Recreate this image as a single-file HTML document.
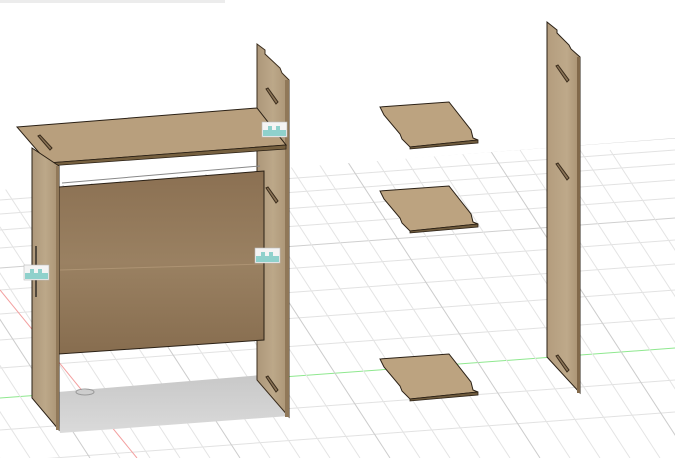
<!DOCTYPE html>
<html><head><style>
html,body{margin:0;padding:0;background:#fff;width:675px;height:458px;overflow:hidden}
svg{display:block}
</style></head><body>
<svg width="675" height="458" viewBox="0 0 675 458" xmlns="http://www.w3.org/2000/svg">
<defs>
<clipPath id="floor"><polygon points="0,190 675,138 675,458 0,458"/></clipPath>
<linearGradient id="side" x1="0" x2="1"><stop offset="0" stop-color="#ad977a"/><stop offset="0.5" stop-color="#bca889"/><stop offset="1" stop-color="#aa9374"/></linearGradient>
<linearGradient id="back" x1="0" y1="0" x2="0" y2="1"><stop offset="0" stop-color="#8b7052"/><stop offset="0.5" stop-color="#9a8162"/><stop offset="1" stop-color="#876d4f"/></linearGradient>
<linearGradient id="tall" x1="0" x2="1"><stop offset="0" stop-color="#b39c7d"/><stop offset="0.6" stop-color="#bea98a"/><stop offset="1" stop-color="#a89172"/></linearGradient>
<linearGradient id="shd" x1="0" y1="0" x2="0" y2="1"><stop offset="0" stop-color="#c8c8c8"/><stop offset="1" stop-color="#dadada"/></linearGradient>
</defs>
<rect x="0" y="0" width="225" height="3" fill="#ececec"/>
<g clip-path="url(#floor)" stroke-width="1" fill="none">
<g stroke="#e2e2e2">
<line x1="0" y1="200" x2="675" y2="150"/>
<line x1="0" y1="214" x2="675" y2="164"/>
<line x1="0" y1="230" x2="675" y2="180"/>
<line x1="0" y1="248" x2="675" y2="198"/>
<line x1="0" y1="290" x2="675" y2="240"/>
<line x1="0" y1="314" x2="675" y2="264"/>
<line x1="0" y1="340" x2="675" y2="290"/>
<line x1="0" y1="368" x2="675" y2="318"/>
<line x1="0" y1="430" x2="675" y2="380"/>
<line x1="0" y1="462" x2="675" y2="412"/>
</g>
<g stroke="#cfcfcf">
<line x1="0" y1="188" x2="675" y2="138"/>
<line x1="0" y1="268" x2="675" y2="218"/>
</g>
<line x1="0" y1="398" x2="675" y2="348" stroke="#8fe88f"/>
<g stroke="#e4e4e4">
<line x1="-260" y1="150" x2="-60" y2="458"/>
<line x1="-230" y1="150" x2="-30" y2="458"/>
<line x1="-200" y1="150" x2="0" y2="458"/>
<line x1="-170" y1="150" x2="30" y2="458"/>
<line x1="-140" y1="150" x2="60" y2="458"/>
<line x1="-80" y1="150" x2="120" y2="458"/>
<line x1="-50" y1="150" x2="150" y2="458"/>
<line x1="-20" y1="150" x2="180" y2="458"/>
<line x1="10" y1="150" x2="210" y2="458"/>
<line x1="70" y1="150" x2="270" y2="458"/>
<line x1="100" y1="150" x2="300" y2="458"/>
<line x1="130" y1="150" x2="330" y2="458"/>
<line x1="160" y1="150" x2="360" y2="458"/>
<line x1="220" y1="150" x2="420" y2="458"/>
<line x1="250" y1="150" x2="450" y2="458"/>
<line x1="280" y1="150" x2="480" y2="458"/>
<line x1="310" y1="150" x2="510" y2="458"/>
<line x1="370" y1="150" x2="570" y2="458"/>
<line x1="400" y1="150" x2="600" y2="458"/>
<line x1="430" y1="150" x2="630" y2="458"/>
<line x1="460" y1="150" x2="660" y2="458"/>
<line x1="520" y1="150" x2="720" y2="458"/>
<line x1="550" y1="150" x2="750" y2="458"/>
<line x1="580" y1="150" x2="780" y2="458"/>
<line x1="610" y1="150" x2="810" y2="458"/>
</g>
<g stroke="#cccccc">
<line x1="-110" y1="150" x2="90" y2="458"/>
<line x1="40" y1="150" x2="240" y2="458"/>
<line x1="190" y1="150" x2="390" y2="458"/>
<line x1="340" y1="150" x2="540" y2="458"/>
<line x1="490" y1="150" x2="690" y2="458"/>
</g>
<line x1="0" y1="290" x2="137" y2="458" stroke="#f3a0a0"/>
</g>
<polygon points="58,392 262,375 289,416 60,433" fill="url(#shd)"/>
<ellipse cx="85" cy="392" rx="9" ry="3" fill="none" stroke="#999"/>
<polygon points="257,44 265,50 265,54 280,68 282,73 289,80 289,417 257,380" fill="url(#side)" stroke="#3a2c1c" stroke-width="1"/>
<rect x="285" y="80" width="4" height="337" fill="#907859"/>
<g stroke="#3a2c1c" stroke-width="1" fill="#8a7356">
<polygon points="266,89 268,88 278,102 276,104"/>
<polygon points="266,188 268,187 278,201 276,203"/>
<polygon points="266,377 268,376 278,390 276,392"/>
</g>
<polygon points="59,187 264,171 264,340 59,354" fill="url(#back)" stroke="#2a2015" stroke-width="1"/>
<line x1="60" y1="270" x2="263" y2="264" stroke="#ad9373" stroke-width="1"/>
<line x1="62" y1="183" x2="260" y2="166" stroke="#888" stroke-width="1"/>
<polygon points="17,127 257,108 286,145 48,163" fill="#b89f7d" stroke="#2a2015" stroke-width="1"/>
<polygon points="48,163 286,145 286,149 48,166" fill="#76603f" stroke="#2a2015" stroke-width="0.8"/>
<polygon points="38,136 40,135 52,148 50,150" fill="#8a7356" stroke="#3a2c1c" stroke-width="1"/>
<polygon points="32,148 59,166 59,430 32,398" fill="url(#side)" stroke="#2a2015" stroke-width="1"/>
<rect x="56" y="166" width="3" height="264" fill="#907859"/>
<line x1="36" y1="246" x2="36" y2="297" stroke="#111" stroke-width="1.2"/>
<g>
<rect x="262" y="122" width="25" height="15" fill="#f4f4f4" stroke="#bbb" stroke-width="0.6"/>
<path d="M263,136 V130 H268 V126 H272 V130 H276 V126 H280 V130 H286 V136 Z" fill="#8fd1cc"/>
<rect x="255" y="248" width="25" height="15" fill="#f4f4f4" stroke="#bbb" stroke-width="0.6"/>
<path d="M256,262 V256 H261 V252 H265 V256 H269 V252 H273 V256 H279 V262 Z" fill="#8fd1cc"/>
<rect x="24" y="265" width="25" height="15" fill="#f4f4f4" stroke="#bbb" stroke-width="0.6"/>
<path d="M25,279 V273 H30 V269 H34 V273 H38 V269 H42 V273 H48 V279 Z" fill="#8fd1cc"/>
</g>
<g id="sh">
<polygon points="380,107 449,102 471,130 473,138 478,140 410,147 402,139 400,134 384,115" fill="#bca380" stroke="#2a2015" stroke-width="1"/>
<polygon points="410,147 478,140 478,143 410,149" fill="#6e5a3c" stroke="#2a2015" stroke-width="0.8"/>
</g>
<use href="#sh" transform="translate(0,84)"/>
<use href="#sh" transform="translate(0,252)"/>
<polygon points="547,22 557,30 557,33 569,45 571,49 580,57 580,393 547,357" fill="url(#tall)" stroke="#2a2015" stroke-width="1"/>
<rect x="577" y="57" width="3" height="336" fill="#82694b"/>
<g stroke="#3a2c1c" stroke-width="1" fill="#8a7356">
<polygon points="556,66 558,65 569,80 567,82"/>
<polygon points="556,164 558,163 569,178 567,180"/>
<polygon points="556,356 558,355 569,370 567,372"/>
</g>
</svg>
</body></html>
